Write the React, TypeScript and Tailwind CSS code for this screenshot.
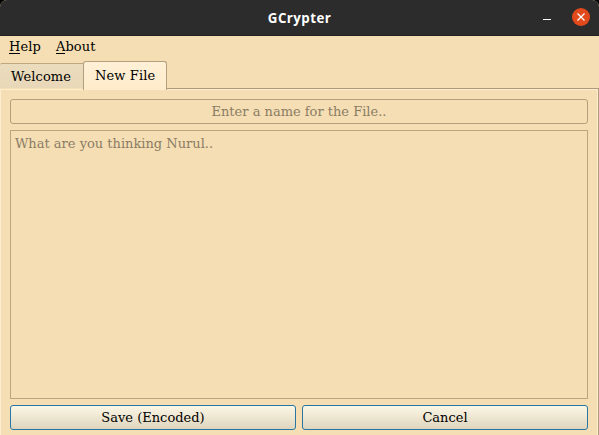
import React from 'react';

function TitleBar() {
  return (
    <header className="grid h-9 shrink-0 grid-cols-[1fr_auto_1fr] items-center rounded-t-[7px] border-b border-[#222222] bg-[#2c2c2c]">
      <span />
      <h1 className="font-['Open_Sans','Noto_Sans',sans-serif] text-[13.3px] leading-5 font-bold tracking-[0.45px] text-white">GCrypter</h1>
      <div className="flex h-full justify-end gap-[21px] pt-2 pr-[9px]">
        <button aria-label="Minimize" className="mt-[11px] h-px w-2 bg-white" />
        <button aria-label="Close" className="flex size-[18px] items-center justify-center rounded-full bg-[#e2491b]">
          <svg width="8" height="8" viewBox="0 0 8 8" fill="none" stroke="white" strokeWidth="1.3">
            <path d="M0.5 0.5 7.5 7.5M7.5 0.5 0.5 7.5" />
          </svg>
        </button>
      </div>
    </header>
  );
}

function MenuItem({ label }: { label: string }) {
  return (
    <button className="flex leading-4 tracking-[0.1px]">
      <span className="h-[15px] border-b border-black">{label[0]}</span>
      {label.slice(1)}
    </button>
  );
}

function ActionButton({ label }: { label: string }) {
  return (
    <button className="h-[25px] flex-1 rounded-[3px] border border-[#2675a3] bg-linear-to-b from-[#fbf7e6] to-[#dfd5bd] text-center leading-[23px]">
      {label}
    </button>
  );
}

export default function App() {
  return (
    <div className="h-[435px] w-[599px] overflow-hidden bg-black">
      <div className="flex h-full flex-col rounded-t-[7px] bg-[#f5deb3] font-['DejaVu_Serif',serif] text-[13px] text-black">
        <TitleBar />
        <nav className="flex h-[25px] shrink-0 gap-[15px] pt-[3px] pl-[9px]">
          <MenuItem label="Help" />
          <MenuItem label="About" />
        </nav>
        <div className="flex h-7 shrink-0 tracking-[0.12px]">
          <div className="mt-[2px] h-[25px] w-[83px] rounded-tl-[2px] border-t border-[#bba882] bg-linear-to-b from-[#ebdcbe] to-[#e8d8b8] pl-[11px] leading-[26px]">
            Welcome
          </div>
          <div className="z-10 h-[29px] w-[84px] shrink-0 rounded-t-[3px] border border-b-0 border-[#b39f7d] bg-linear-to-b from-[#fff0d6] to-[#feebcb] pl-[11px] leading-[27px]">
            New File
          </div>
          <div className="flex-1 border-b border-[#ae9b79]" />
        </div>
        <main className="flex min-h-0 flex-1 flex-col border-r border-[#ae9b79]">
          <div className="flex min-h-0 flex-1 flex-col border-x border-t border-[#feedce] pt-[9px] pr-[9px] pb-[5px] pl-[9px]">
            <input
              aria-label="File name"
              placeholder="Enter a name for the File.."
              className="h-[25px] shrink-0 rounded-[3px] border border-[#b39f7d] bg-transparent text-center outline-none placeholder:text-[#8a7c65] placeholder:opacity-100"
            />
            <textarea
              aria-label="File content"
              placeholder="What are you thinking Nurul.."
              className="mt-[6px] h-[269px] shrink-0 resize-none border border-[#b9a681] bg-transparent px-1 py-[5px] leading-4 outline-none placeholder:text-[#8a7c65] placeholder:opacity-100"
            />
            <div className="mt-[6px] flex shrink-0 gap-[6px]">
              <ActionButton label="Save (Encoded)" />
              <ActionButton label="Cancel" />
            </div>
          </div>
        </main>
      </div>
    </div>
  );
}
